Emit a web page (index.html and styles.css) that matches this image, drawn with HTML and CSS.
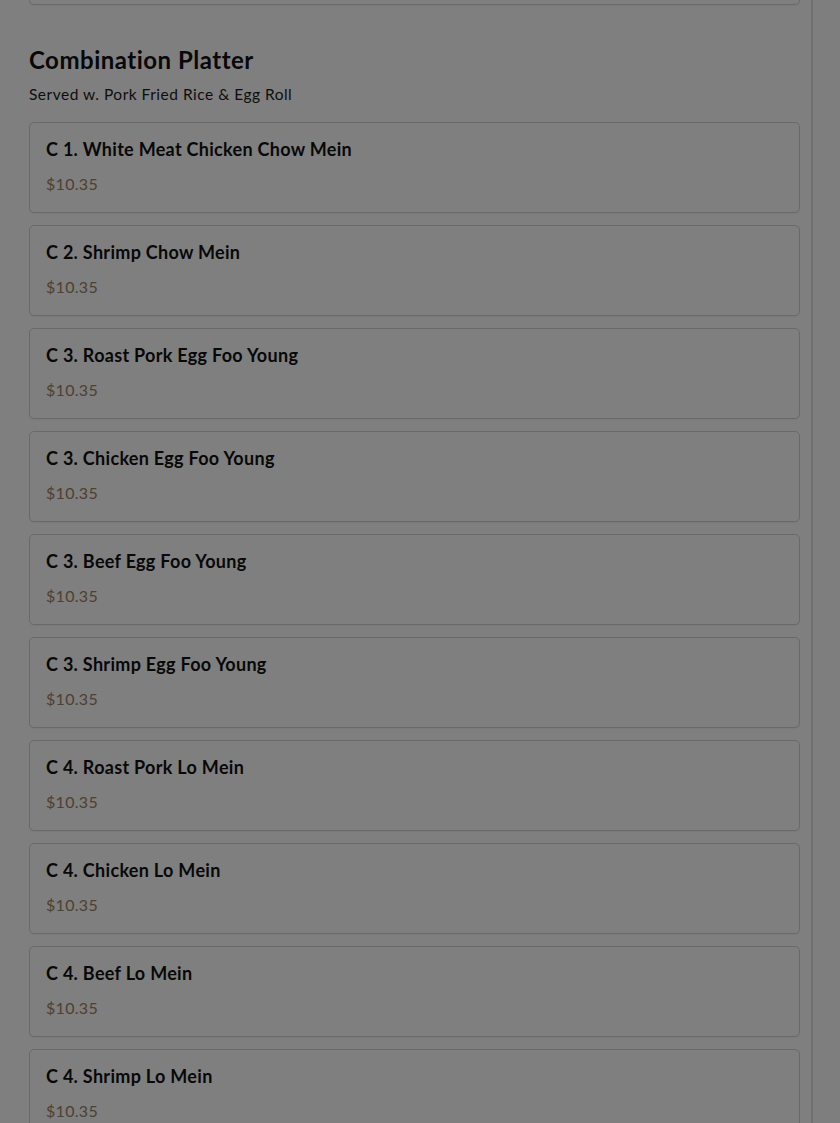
FILE: index.html
```html
<!DOCTYPE html>
<html>
<head>
<meta charset="utf-8">
<link rel="stylesheet" href="styles.css">
</head>
<body>
<div class="layout">
  <main class="menu">
    <div class="card card-tail"></div>
    <section class="section">
      <h2 class="section-title">Combination Platter</h2>
      <p class="section-desc">Served w. Pork Fried Rice &amp; Egg Roll</p>
      <div class="items">
        <div class="card"><div class="item-name">C 1. White Meat Chicken Chow Mein</div><div class="item-price">$10.35</div></div>
        <div class="card"><div class="item-name">C 2. Shrimp Chow Mein</div><div class="item-price">$10.35</div></div>
        <div class="card"><div class="item-name">C 3. Roast Pork Egg Foo Young</div><div class="item-price">$10.35</div></div>
        <div class="card"><div class="item-name">C 3. Chicken Egg Foo Young</div><div class="item-price">$10.35</div></div>
        <div class="card"><div class="item-name">C 3. Beef Egg Foo Young</div><div class="item-price">$10.35</div></div>
        <div class="card"><div class="item-name">C 3. Shrimp Egg Foo Young</div><div class="item-price">$10.35</div></div>
        <div class="card"><div class="item-name">C 4. Roast Pork Lo Mein</div><div class="item-price">$10.35</div></div>
        <div class="card"><div class="item-name">C 4. Chicken Lo Mein</div><div class="item-price">$10.35</div></div>
        <div class="card"><div class="item-name">C 4. Beef Lo Mein</div><div class="item-price">$10.35</div></div>
        <div class="card"><div class="item-name">C 4. Shrimp Lo Mein</div><div class="item-price">$10.35</div></div>
      </div>
    </section>
  </main>
  <aside class="side"></aside>
</div>
<div class="overlay"></div>
</body>
</html>
```
FILE: styles.css
```css
html, body {
  margin: 0;
  padding: 0;
  background: #ffffff;
  font-family: "Lato", "Open Sans", sans-serif;
  color: #222;
  overflow: hidden;
  height: 1123px;
}
.layout {
  display: flex;
  height: 1123px;
}
.menu {
  width: 811px;
  box-sizing: border-box;
  padding: 0 11px 0 29px;
}
.side {
  flex: 1;
  border-left: 2px solid #e0e0e0;
  background: #fdfdfd;
}
.card {
  border: 1px solid #d3d3d3;
  border-radius: 5px;
  padding: 15px 16px 17px;
  background: #fff;
  box-shadow: 0 1px 2px rgba(0,0,0,0.06);
}
.card-tail {
  height: 5px;
  padding: 0;
  border-top: none;
  border-top-left-radius: 0;
  border-top-right-radius: 0;
  box-sizing: border-box;
}
.section-title {
  margin: 40px 0 0;
  font-size: 24px;
  line-height: 30px;
  font-weight: 700;
  letter-spacing: 0.5px;
  color: #111;
}
.section-desc {
  margin: 9px 0 0;
  font-size: 15.5px;
  line-height: 20px;
  letter-spacing: 0.5px;
  color: #1a1a1a;
}
.items {
  margin-top: 18px;
  display: flex;
  flex-direction: column;
  gap: 12px;
}
.item-name {
  font-size: 18px;
  line-height: 22px;
  font-weight: 700;
  letter-spacing: 0.3px;
  color: #111;
}
.item-price {
  margin-top: 13px;
  font-size: 16px;
  line-height: 22px;
  letter-spacing: 0.3px;
  color: #9a8262;
}
.overlay {
  position: fixed;
  inset: 0;
  background: rgba(0, 0, 0, 0.5);
}
```
